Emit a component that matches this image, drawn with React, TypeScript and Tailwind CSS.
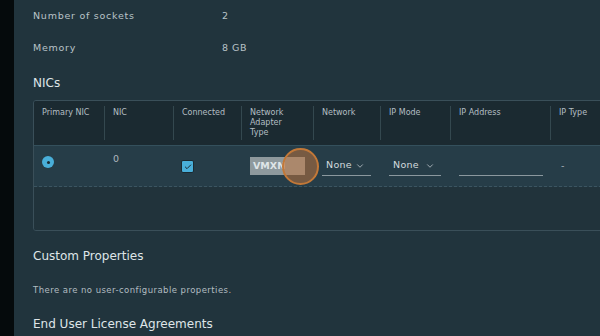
import { ChevronDown, Check } from 'lucide-react';

const font = { fontFamily: '"DejaVu Sans", "Noto Sans", sans-serif' };

// 表头列
const columns = [
  { label: 'Primary NIC', w: 'w-[70px]' },
  { label: 'NIC', w: 'w-[69px]' },
  { label: 'Connected', w: 'w-[68px]' },
  { label: 'Network Adapter Type', w: 'w-[72px]' },
  { label: 'Network', w: 'w-[67px]' },
  { label: 'IP Mode', w: 'w-[70px]' },
  { label: 'IP Address', w: 'w-[100px]' },
  { label: 'IP Type', w: 'w-[90px]' },
];

function Select({ value, width }: { value: string; width: string }) {
  return (
    <div className={`${width} h-[20px] flex items-center justify-between pl-1 pr-1.5 border-b border-[#8b989e] text-[9.5px] tracking-[0.3px] text-[#d3dade]`}>
      <span>{value}</span>
      <ChevronDown size={10} strokeWidth={2} className="text-[#b7c1c6]" />
    </div>
  );
}

export default function App() {
  return (
    <div className="flex w-[600px] h-[336px] overflow-hidden bg-[#21343d]" style={font}>
      <div className="w-[14px] shrink-0 bg-[#050a0c]" />
      <main className="flex-1 pl-[19px] flex flex-col">
        {/* 属性 */}
        <div className="flex items-center h-[20px] mt-[6px] text-[9.5px] text-[#b9c3c8]">
          <span className="w-[189px] tracking-[0.75px]">Number of sockets</span>
          <span>2</span>
        </div>
        <div className="flex items-center h-[20px] mt-[12px] text-[9.5px] text-[#b9c3c8]">
          <span className="w-[189px] tracking-[0.75px]">Memory</span>
          <span className="tracking-[0.5px]">8 GB</span>
        </div>
        <h2 className="h-[20px] mt-[15px] flex items-center text-[12px] text-[#dfe5e8]">NICs</h2>

        {/* NIC 表格 */}
        <div className="mt-[7px] w-[640px] shrink-0 border border-[#3a4f59] rounded-[3px] overflow-hidden">
          <div className="flex h-[45px] bg-[#1b2a31] border-b border-[#34505c]">
            {columns.map((c, i) => (
              <div key={c.label} className={`${c.w} shrink-0 flex`}>
                {i > 0 && <div className="w-px bg-[#34484f] my-[5px]" />}
                <div className="pl-[8px] pt-[7px] pr-1 text-[8px] text-[#b3bec3]">
                  {c.label.split(' ').length === 3 ? (
                    c.label.split(' ').map((w) => (
                      <div key={w} className="h-[10px] leading-[10px]">{w}</div>
                    ))
                  ) : (
                    <div className="h-[10px] leading-[10px] whitespace-nowrap">{c.label}</div>
                  )}
                </div>
              </div>
            ))}
          </div>

          <div className="relative flex h-[41px] bg-[#263d48] border-b border-dashed border-[#3b5561]">
            <div className="w-[70px] shrink-0 pl-[8px] pt-[10px]">
              <div className="w-[12px] h-[12px] rounded-full bg-[#49afd9] flex items-center justify-center">
                <div className="w-[3px] h-[3px] rounded-full bg-[#1b2a31]" />
              </div>
            </div>
            <div className="w-[69px] shrink-0 pl-[9px] pt-[6px] text-[9.5px] text-[#aeb9be]">0</div>
            <div className="w-[68px] shrink-0 pl-[8px] pt-[14px]">
              <div className="w-[13px] h-[13px] rounded-[2px] bg-[#49afd9] border border-[#1b2a31] flex items-center justify-center">
                <Check size={8} strokeWidth={3} className="text-[#1b2a31]" />
              </div>
            </div>
            <div className="w-[72px] shrink-0 pl-[9px] flex items-center">
              <div className="w-[55px] h-[18px] bg-[#8e999d] flex items-center pl-[3px] text-[9.5px] font-bold text-[#dfe5e8]">
                VMXN
              </div>
            </div>
            <div className="w-[67px] shrink-0 pl-[9px] flex items-center">
              <Select value="None" width="w-[49px]" />
            </div>
            <div className="w-[70px] shrink-0 pl-[9px] flex items-center">
              <Select value="None" width="w-[52px]" />
            </div>
            <div className="w-[100px] shrink-0 pl-[9px] flex items-center">
              <div className="w-[84px] h-[20px] border-b border-[#8b989e]" />
            </div>
            <div className="w-[90px] shrink-0 pl-[11px] flex items-center text-[9.5px] text-[#aeb9be]">-</div>

            {/* 点击光标 */}
            <div className="absolute left-[248px] top-[2px] w-[37px] h-[37px] rounded-full bg-[#c8783c]/50 border-2 border-[#c27838]" />
          </div>

          <div className="h-[43px] bg-[#21333b]" />
        </div>

        <h2 className="mt-[16px] h-[18px] flex items-center text-[12px] text-[#dfe5e8]">Custom Properties</h2>
        <p className="mt-[19px] h-[12px] flex items-center text-[8.5px] tracking-[0.45px] text-[#b2bcc1]">
          There are no user-configurable properties.
        </p>
        <h2 className="mt-[19px] h-[18px] flex items-center text-[12px] text-[#dfe5e8]">End User License Agreements</h2>
      </main>
    </div>
  );
}
